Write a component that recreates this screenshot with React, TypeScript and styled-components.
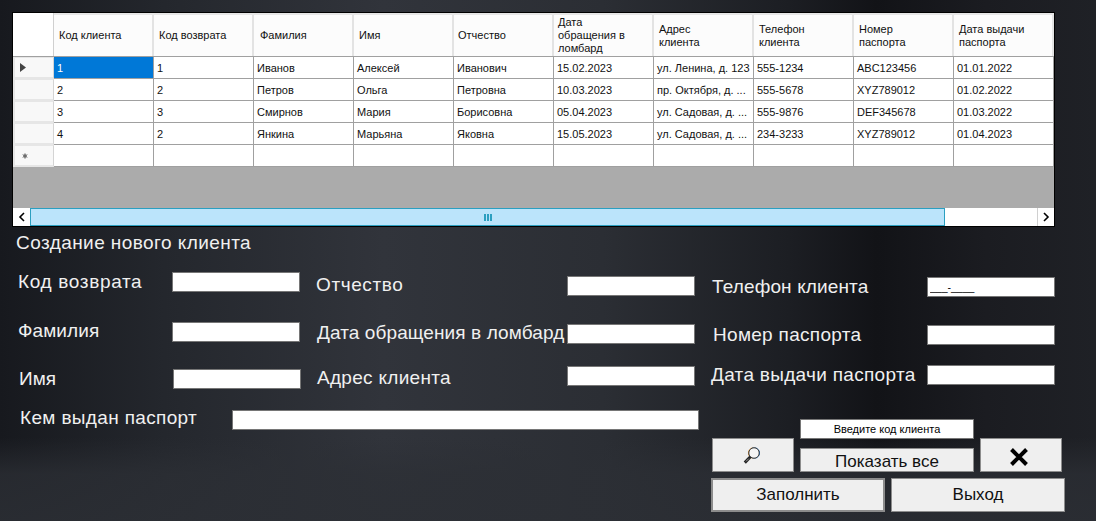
import React from 'react';
import styled, { createGlobalStyle } from 'styled-components';

const GlobalStyle = createGlobalStyle`
    html, body {
        margin: 0;
        padding: 0;
        background: #1d1f24;
    }
    * {
        box-sizing: border-box;
    }
`;

const Page = styled.div`
    width: 1096px;
    height: 521px;
    overflow: hidden;
    padding: 12px 0 0 0;
    font-family: "Liberation Sans", Arial, sans-serif;
    background:
        linear-gradient(180deg, rgba(44,47,53,0) 0, rgba(44,47,53,0) 84%, rgba(44,47,53,0.75) 91%, rgba(44,47,53,0.85) 100%),
        linear-gradient(90deg, #17191e 0, #24272d 15%, #31343b 35%, #2b2e34 55%, #1c1e23 72%, #121317 80%, #1b1c21 90%, #1f2126 100%);
`;

/* data grid */
const Grid = styled.div`
    width: 1043px;
    height: 215px;
    margin-left: 12px;
    border: 1px solid #000;
    background: #ababab;
    display: flex;
    flex-direction: column;
    font-size: 11px;
    color: #111;
`;

const HeaderRow = styled.div`
    display: flex;
    height: 44px;
    background: #e6e6e6;
    border-bottom: 1px solid #a0a0a0;
`;

const Corner = styled.div`
    width: 41px;
    background: #fff;
    border-right: 1px solid #d0d0d0;
`;

const HeaderCell = styled.div<{ $indent: number }>`
    width: 100px;
    margin-top: 2px;
    padding-left: ${p => p.$indent}px;
    padding-right: 6px;
    background: #fcfcfc;
    border-right: 2px solid #e3e3e3;
    display: flex;
    align-items: center;
    line-height: 13px;
    white-space: pre-line;
`;

const Row = styled.div`
    display: flex;
    height: 22px;
    background: #fff;
`;

const RowHead = styled.div`
    width: 41px;
    padding-left: 5px;
    background: #f8f8f8;
    border: 2px solid #e6e6e6;
    border-right: 1px solid #d4d4d4;
    border-top: 1px solid #e6e6e6;
    display: flex;
    align-items: center;
    color: #444;
`;

const Cell = styled.div<{ $selected?: boolean }>`
    width: 100px;
    padding-left: 3px;
    border-right: 1px solid #a0a0a0;
    border-bottom: 1px solid #a0a0a0;
    background: ${p => (p.$selected ? '#0078d7' : '#fff')};
    color: ${p => (p.$selected ? '#fff' : '#111')};
    line-height: 22px;
    white-space: nowrap;
    overflow: hidden;
`;

const Empty = styled.div`
    flex: 1;
`;

const ScrollBar = styled.div`
    display: flex;
    height: 18px;
    background: #fff;
`;

const ScrollButton = styled.div<{ $left?: boolean }>`
    width: 17px;
    display: flex;
    align-items: center;
    justify-content: center;
    border-left: ${p => (p.$left ? 'none' : '1px solid #d0d0d0')};
`;

const ScrollThumb = styled.div`
    width: 915px;
    background: #bbe4fb;
    border: 1px solid #2b9fc0;
    display: flex;
    align-items: center;
    justify-content: center;
    color: #2b9fc0;
`;

const ScrollTrack = styled.div`
    flex: 1;
`;

/* form */
const Title = styled.div`
    margin: 6px 0 0 16px;
    height: 20px;
    font-size: 19px;
    line-height: 20px;
    letter-spacing: 0.43px;
    color: #f0f0f0;
`;

const Columns = styled.div`
    display: flex;
    margin-top: 19px;
    height: 118px;
`;

const Column = styled.div<{ $left: number; $width: number }>`
    width: ${p => p.$width}px;
    padding-left: ${p => p.$left}px;
`;

const Field = styled.div<{ $top: number; $indent?: number }>`
    display: flex;
    height: 20px;
    margin-top: ${p => p.$top}px;
    margin-left: ${p => p.$indent ?? 0}px;
`;

const Label = styled.div<{ $width: number; $shift?: number; $spacing?: number }>`
    width: ${p => p.$width}px;
    margin-top: ${p => p.$shift ?? 0}px;
    font-size: 19px;
    line-height: 20px;
    letter-spacing: ${p => p.$spacing ?? 0.3}px;
    color: #f0f0f0;
    white-space: nowrap;
`;

const TextBox = styled.input<{ $width?: number }>`
    width: ${p => p.$width ?? 128}px;
    height: 20px;
    padding: 0 2px;
    border: 1px solid #767676;
    border-radius: 0;
    outline: none;
    background: #fff;
    color: #000;
    font-family: "Liberation Sans", Arial, sans-serif;
    font-size: 10.5px;
`;

const Bottom = styled.div`
    display: flex;
    margin-top: 20px;
`;

const IssuedBy = styled.div`
    width: 711px;
    padding-left: 20px;
`;

const Actions = styled.div`
    padding-top: 9px;
`;

const ActionTop = styled.div`
    display: flex;
    gap: 6px;
    align-items: flex-end;
    margin-left: 1px;
`;

const ActionMiddle = styled.div`
    width: 174px;
    display: flex;
    flex-direction: column;
    gap: 9px;
`;

const ActionBottom = styled.div`
    display: flex;
    gap: 6px;
    margin-top: 6px;
`;

const Hint = styled.div`
    height: 20px;
    background: #fff;
    border: 1px solid #767676;
    font-size: 11px;
    line-height: 18px;
    text-align: center;
    color: #000;
`;

const Button = styled.button<{ $width: number; $height: number; $primary?: boolean }>`
    width: ${p => p.$width}px;
    height: ${p => p.$height}px;
    padding: 0;
    background: #efefef;
    border: ${p => (p.$primary ? '2px solid #8c8c8c' : '1px solid #8c8c8c')};
    border-radius: 0;
    color: #111;
    font-family: "Liberation Sans", Arial, sans-serif;
    font-size: 17px;
    display: flex;
    align-items: center;
    justify-content: center;
`;

const ShowAllLabel = styled.span`
    margin-top: 4px;
`;

const SearchGlyph = styled.svg`
    margin: 2px 2px 0 0;
`;

const CloseGlyph = styled.svg`
    margin: 4px 4px 0 0;
`;

const columns: { title: string; indent: number }[] = [
    { title: 'Код клиента', indent: 5 },
    { title: 'Код возврата', indent: 5 },
    { title: 'Фамилия', indent: 6 },
    { title: 'Имя', indent: 5 },
    { title: 'Отчество', indent: 4 },
    { title: 'Дата\nобращения в\nломбард', indent: 4 },
    { title: 'Адрес\nклиента', indent: 5 },
    { title: 'Телефон\nклиента', indent: 5 },
    { title: 'Номер\nпаспорта', indent: 5 },
    { title: 'Дата выдачи\nпаспорта', indent: 5 },
];

const rows: string[][] = [
    ['1', '1', 'Иванов', 'Алексей', 'Иванович', '15.02.2023', 'ул. Ленина, д. 123', '555-1234', 'ABC123456', '01.01.2022'],
    ['2', '2', 'Петров', 'Ольга', 'Петровна', '10.03.2023', 'пр. Октября, д. ...', '555-5678', 'XYZ789012', '01.02.2022'],
    ['3', '3', 'Смирнов', 'Мария', 'Борисовна', '05.04.2023', 'ул. Садовая, д. ...', '555-9876', 'DEF345678', '01.03.2022'],
    ['4', '2', 'Янкина', 'Марьяна', 'Яковна', '15.05.2023', 'ул. Садовая, д. ...', '234-3233', 'XYZ789012', '01.04.2023'],
    ['', '', '', '', '', '', '', '', '', ''],
];

const Chevron = ({ left }: { left?: boolean }) => (
    <svg width="8" height="10" viewBox="0 0 8 10">
        <path d={left ? 'M6 1L2 5l4 4' : 'M2 1l4 4-4 4'} fill="none" stroke="#000" strokeWidth="1.6" />
    </svg>
);

const RowArrow = () => (
    <svg width="6" height="9" viewBox="0 0 6 9">
        <path d="M0 0l6 4.5L0 9z" fill="#444" />
    </svg>
);

const NewRowMark = () => (
    <svg width="6" height="6" viewBox="0 0 6 6" style={{ marginLeft: 2 }}>
        <circle cx="3" cy="3" r="1.8" fill="#555" />
        <path d="M3 0v6M0.5 1.5l5 3M0.5 4.5l5-3" stroke="#777" strokeWidth="0.7" />
    </svg>
);

const Grip = () => (
    <svg width="8" height="7" viewBox="0 0 8 7">
        <path d="M0 0h2v7H0zM3 0h2v7H3zM6 0h2v7H6z" fill="#2b9fc0" />
    </svg>
);

const SearchIcon = () => (
    <SearchGlyph width="18" height="18" viewBox="0 0 18 18">
        <circle cx="10.6" cy="6" r="5.2" fill="none" stroke="#d98a2b" strokeWidth="1" />
        <circle cx="11.4" cy="6" r="5.2" fill="none" stroke="#2a6fb5" strokeWidth="1" />
        <circle cx="11" cy="6" r="5.2" fill="#f4f4f4" stroke="#333" strokeWidth="0.9" />
        <path d="M7.4 9.8L1.8 15.6" stroke="#222" strokeWidth="3" />
        <path d="M5.8 11.6L3 14.4" stroke="#bbb" strokeWidth="0.8" />
    </SearchGlyph>
);

const CloseIcon = () => (
    <CloseGlyph width="18" height="18" viewBox="0 0 18 18">
        <path d="M1.5 1.5l15 15M16.5 1.5l-15 15" stroke="#000" strokeWidth="4" />
    </CloseGlyph>
);

export default function App() {
    return (
        <Page>
            <GlobalStyle />
            <Grid>
                <HeaderRow>
                    <Corner />
                    {columns.map(c => (
                        <HeaderCell key={c.title} $indent={c.indent}>{c.title}</HeaderCell>
                    ))}
                </HeaderRow>
                {rows.map((row, i) => (
                    <Row key={i}>
                        <RowHead>
                            {i === 0 && <RowArrow />}
                            {i === rows.length - 1 && <NewRowMark />}
                        </RowHead>
                        {row.map((value, j) => (
                            <Cell key={j} $selected={i === 0 && j === 0}>{value}</Cell>
                        ))}
                    </Row>
                ))}
                <Empty />
                <ScrollBar>
                    <ScrollButton $left><Chevron left /></ScrollButton>
                    <ScrollThumb><Grip /></ScrollThumb>
                    <ScrollTrack />
                    <ScrollButton><Chevron /></ScrollButton>
                </ScrollBar>
            </Grid>

            <Title>Создание нового клиента</Title>

            <Columns>
                <Column $left={18} $width={316}>
                    <Field $top={0}>
                        <Label $width={154} $spacing={0.66}>Код возврата</Label>
                        <TextBox readOnly />
                    </Field>
                    <Field $top={30}>
                        <Label $width={154} $shift={-1} $spacing={0.1}>Фамилия</Label>
                        <TextBox readOnly />
                    </Field>
                    <Field $top={27} $indent={1}>
                        <Label $width={154} $spacing={0}>Имя</Label>
                        <TextBox readOnly />
                    </Field>
                </Column>
                <Column $left={0} $width={395}>
                    <Field $top={4}>
                        <Label $width={251} $shift={-1} $spacing={0.6}>Отчество</Label>
                        <TextBox readOnly />
                    </Field>
                    <Field $top={28} $indent={1}>
                        <Label $width={250} $shift={-1} $spacing={0.1}>Дата обращения в ломбард</Label>
                        <TextBox readOnly />
                    </Field>
                    <Field $top={22} $indent={1}>
                        <Label $width={250} $shift={2}>Адрес клиента</Label>
                        <TextBox readOnly />
                    </Field>
                </Column>
                <Column $left={0} $width={385}>
                    <Field $top={5} $indent={1}>
                        <Label $width={215} $spacing={0.13}>Телефон клиента</Label>
                        <TextBox readOnly value="___-____" />
                    </Field>
                    <Field $top={28} $indent={2}>
                        <Label $width={214}>Номер паспорта</Label>
                        <TextBox readOnly />
                    </Field>
                    <Field $top={20}>
                        <Label $width={216}>Дата выдачи паспорта</Label>
                        <TextBox readOnly />
                    </Field>
                </Column>
            </Columns>

            <Bottom>
                <IssuedBy>
                    <Field $top={0}>
                        <Label $width={212} $shift={-2} $spacing={0.35}>Кем выдан паспорт</Label>
                        <TextBox readOnly $width={467} />
                    </Field>
                </IssuedBy>
                <Actions>
                    <ActionTop>
                        <Button $width={82} $height={34}><SearchIcon /></Button>
                        <ActionMiddle>
                            <Hint>Введите код клиента</Hint>
                            <Button $width={174} $height={24}><ShowAllLabel>Показать все</ShowAllLabel></Button>
                        </ActionMiddle>
                        <Button $width={82} $height={34}><CloseIcon /></Button>
                    </ActionTop>
                    <ActionBottom>
                        <Button $width={174} $height={34} $primary>Заполнить</Button>
                        <Button $width={174} $height={34}>Выход</Button>
                    </ActionBottom>
                </Actions>
            </Bottom>
        </Page>
    );
}
